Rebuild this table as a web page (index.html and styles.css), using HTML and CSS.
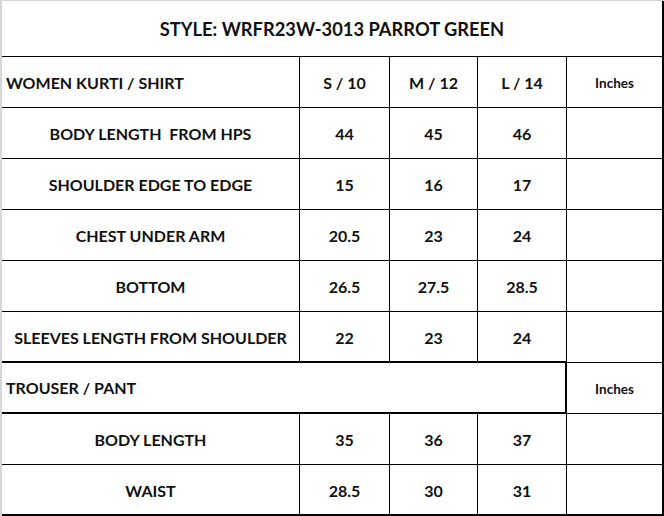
FILE: index.html
```html
<!DOCTYPE html>
<html>
<head>
<meta charset="utf-8">
<link rel="stylesheet" href="styles.css">
</head>
<body>
<div class="sheet">
  <div class="cell title span5">STYLE: WRFR23W-3013 PARROT GREEN</div>

  <div class="cell left">WOMEN KURTI / SHIRT</div>
  <div class="cell">S / 10</div>
  <div class="cell">M / 12</div>
  <div class="cell">L / 14</div>
  <div class="cell small last">Inches</div>

  <div class="cell label">BODY LENGTH&nbsp; FROM HPS</div>
  <div class="cell">44</div>
  <div class="cell">45</div>
  <div class="cell">46</div>
  <div class="cell last"></div>

  <div class="cell label">SHOULDER EDGE TO EDGE</div>
  <div class="cell">15</div>
  <div class="cell">16</div>
  <div class="cell">17</div>
  <div class="cell last"></div>

  <div class="cell label">CHEST UNDER ARM</div>
  <div class="cell">20.5</div>
  <div class="cell">23</div>
  <div class="cell">24</div>
  <div class="cell last"></div>

  <div class="cell label">BOTTOM</div>
  <div class="cell">26.5</div>
  <div class="cell">27.5</div>
  <div class="cell">28.5</div>
  <div class="cell last"></div>

  <div class="cell label thickb">SLEEVES LENGTH FROM SHOULDER</div>
  <div class="cell thickb">22</div>
  <div class="cell thickb">23</div>
  <div class="cell thickb">24</div>
  <div class="cell last"></div>

  <div class="cell left span4 section">TROUSER / PANT</div>
  <div class="cell small last">Inches</div>

  <div class="cell label">BODY LENGTH</div>
  <div class="cell">35</div>
  <div class="cell">36</div>
  <div class="cell">37</div>
  <div class="cell last"></div>

  <div class="cell label bottom">WAIST</div>
  <div class="cell bottom">28.5</div>
  <div class="cell bottom">30</div>
  <div class="cell bottom">31</div>
  <div class="cell last bottom"></div>
</div>
</body>
</html>
```

FILE: styles.css
```css
html, body {
  margin: 0;
  padding: 0;
  background: #fff;
}

.sheet {
  width: 664px;
  height: 516px;
  box-sizing: border-box;
  border-top: 1px solid #d6d6d6;
  border-left: 2px solid #d6d6d6;
  display: grid;
  grid-template-columns: 298px 90px 88px 89px 97px;
  grid-template-rows: 56px repeat(9, 51px);
  font-family: Lato, "Open Sans", sans-serif;
  font-weight: 700;
  color: #111;
}

.cell {
  box-sizing: border-box;
  border-right: 1px solid #000;
  border-bottom: 1px solid #000;
  display: flex;
  align-items: center;
  justify-content: center;
  padding-top: 1px;
  font-size: 16px;
  white-space: nowrap;
}

.title {
  grid-column: span 5;
  border-right: 2px solid #000;
  font-size: 18.3px;
  padding-top: 0;
}

.span4 { grid-column: span 4; }

.left {
  justify-content: flex-start;
  padding-left: 4px;
}

.small {
  font-size: 13.5px;
}

.last {
  border-right: 2px solid #000;
}

.thickb {
  border-bottom: 2px solid #000;
}

.section {
  border-bottom: 2px solid #000;
  border-right: 2px solid #000;
  padding-top: 0;
}

.bottom {
  border-bottom: 2px solid #000;
}
```
